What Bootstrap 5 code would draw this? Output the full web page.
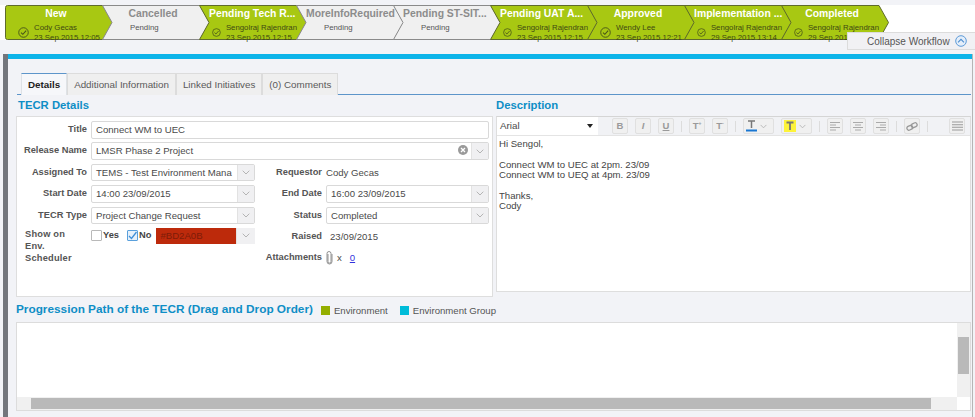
<!DOCTYPE html>
<html lang="en">
<head>
  <meta charset="UTF-8" />
  <meta name="viewport" content="width=device-width, initial-scale=1" />
  <title>TECR Details</title>
  <link href="https://cdn.jsdelivr.net/npm/bootstrap@5.3.3/dist/css/bootstrap.min.css" rel="stylesheet">
  <style>
    body { font-family: "Liberation Sans", Arial, sans-serif; font-size: 9.6px; color: #4a4a4a; background: #f2f3f7; height: 417px; overflow: hidden; }

    /* workflow strip */
    .wf-strip { margin: 5px 0 0; height: 35px; background: #fff; padding-left: 6px; position: relative; }
    .wf-step { position: relative; width: 97px; height: 35px; flex: none; }
    .wf-shape { position: absolute; left: -1px; top: 0; overflow: visible; }
    .wf-title { position: relative; margin-left: 9px; width: 82px; padding-top: 2px; text-align: center; font-size: 10.4px; font-weight: 700; line-height: 14px; white-space: nowrap; }
    .wf-sub { position: relative; display: flex; align-items: center; gap: 5px; padding-left: 12px; margin-top: 2px; font-size: 7.8px; line-height: 9.5px; white-space: nowrap; }
    .wf-done .wf-title { color: #fff; }
    .wf-done .wf-sub { color: #3f4a12; }
    .wf-todo .wf-title { color: #8c8c8c; }
    .wf-todo .wf-sub { color: #555; padding-left: 27px; }
    .wf-collapse { position: absolute; right: 0; top: 27px; width: 128px; height: 18px; background: #f1f1f4; border: 1px solid #dcdcdc; border-right: 0; font-size: 10px; color: #555; padding-left: 19px; gap: 5px; z-index: 5; }

    /* main frame */
    .tc-shell { margin: 14px 2px 0 3px; height: 363px; border-left: 5px solid #73767c; border-right: 1px solid #b5b5b5; }
    .tc-bluebar { height: 5px; background: #0db4e9; }
    .tc-tabs { margin: 14px 1px 0 9px; padding-left: 4px; height: 22px; border-bottom: 1px solid #5d95ca; flex-wrap: nowrap; }
    .tc-tabs .nav-link { height: 22px; padding: 4px 6px 0; font-size: 9.8px; line-height: 14px; color: #5a5a5a; background: #efefef; border: 1px solid #dcdcdc; border-bottom: 0; border-radius: 0; margin: 0; }
    .tc-tabs .nav-link.active { color: #222; font-weight: 700; background: #f6f7fa; border-top: 1px solid #5d95ca; height: 22px; }
    .tc-head { font-size: 11.3px; font-weight: 700; color: #0e8ec6; line-height: 14px; }
    .tc-columns { padding-left: 8px; padding-right: 1px; }
    .tc-left { width: 477px; flex: none; }
    .tc-right { margin-left: 3px; flex: 1 1 auto; }
    .tc-headrow { height: 21px; padding-top: 3px; padding-left: 2px; }
    .tc-panel { height: 181px; background: #fff; border: 1px solid #dedede; padding: 4px 3px 0 0; }

    /* form rows */
    .tc-row { display: flex; height: 17.5px; margin-bottom: 3.9px; align-items: flex-start; }
    .tc-half { display: flex; width: 238px; flex: none; }
    .tc-grow { display: flex; flex: 1 1 auto; min-width: 0; }
    .tc-label { width: 70px; flex: none; margin-right: 4px; text-align: right; font-weight: 700; font-size: 9.3px; line-height: 17px; color: #555; white-space: nowrap; }
    .tc-label.wide { width: 67px; }
    .tc-label.env { text-align: left; padding-left: 8px; line-height: 12px; white-space: normal; letter-spacing: .2px; }
    .tc-value { line-height: 17px; white-space: nowrap; }
    .tc-field { display: flex; flex: 1 1 auto; min-width: 0; height: 17.5px; padding: 0; border: 1px solid #d9d9d9; border-radius: 2px; background: #fff; font-size: 9.6px; line-height: 15.5px; color: #4a4a4a; }
    .tc-text { flex: 1 1 auto; min-width: 0; padding-left: 4px; overflow: hidden; white-space: nowrap; }
    .tc-drop { width: 17px; flex: none; display: flex; align-items: center; justify-content: center; background: #f0f0f2; border-left: 1px solid #e2e2e2; }
    .tc-clear { flex: none; margin: 2px 3px 0 0; }
    .tc-checkwrap { display: flex; align-items: center; gap: 1px; font-weight: 700; font-size: 9.3px; color: #444; line-height: 15px; }
    .tc-box { width: 11px; height: 11px; border: 1px solid #b9b9b9; border-radius: 1px; background: #fff; display: block; }
    .tc-box.on { border-color: #5aa0dc; background: #e6f1fb; }
    .tc-swatch { width: 80px; height: 16px; flex: none; background: #bd2a0b; color: #7d1c08; padding-left: 4px; line-height: 16px; font-size: 9.6px; }
    .tc-clr { margin-left: 5px; }
    .tc-link { color: #3333dd; }

    /* editor */
    .tc-editor { height: 176px; background: #fff; border: 1px solid #dedede; border-top-color: #d5d5d5; }
    .tc-toolbar { height: 19px; background: #f1f2f5; border-bottom: 1px solid #e4e4e4; gap: 7px; padding: 0 5px 0 0; }
    .tc-font { width: 101px; height: 18px; background: #fff; padding: 0 5px 0 3px; font-size: 9.8px; margin-right: 7px; flex: none; }
    .tc-tool { width: 16px; height: 16px; flex: none; background: #f0f0f0; border: 1px solid #e0e0e0; border-radius: 2px; display: flex; align-items: center; justify-content: center; color: #9a9a9a; font-weight: 700; font-size: 9.5px; line-height: 1; }
    .tc-tool.dd { width: 31px; gap: 3px; justify-content: flex-start; padding-left: 2px; }
    .tc-tool sup { font-size: 5px; top: -3px; }
    .tc-sep { width: 1px; height: 11px; background: #dcdcdc; flex: none; }
    .tc-body { padding: 3px 2px; font-size: 9.6px; line-height: 10.4px; color: #444; }

    /* progression */
    .tc-proghead { height: 25px; padding: 5px 0 0 8px; }
    .tc-legend { font-size: 9.6px; color: #555; gap: 4px; }
    .tc-chip { width: 9px; height: 9px; flex: none; }
    .tc-prog { margin: 0 1px 0 8px; height: 89px; background: #fff; border: 1px solid #dcdcdc; display: grid; grid-template-columns: 1fr 13px; grid-template-rows: 1fr 13px; }
    .tc-vbar { background: #f0f0f0; padding: 14px 1px; position: relative; }
    .tc-hbar { background: #f0f0f0; padding: 1px 26px 1px 14px; }
    .tc-thumb { background: #b9b9b9; height: 100%; }
    .tc-vthumb { background: #b9b9b9; height: 37px; }
  </style>
</head>
<body>
  <svg width="0" height="0" class="position-absolute">
    <symbol id="wf-green" viewBox="0 0 108 35"><path d="M.5.5H98L107.500 17.500 98 34.500H.5L10 17.500Z" fill="#a8c812" stroke="#5f6b2c"/></symbol>
    <symbol id="wf-grey" viewBox="0 0 108 35"><path d="M.5.5H98L107.500 17.500 98 34.500H.5L10 17.500Z" fill="#f0f0f0" stroke="#8a8a8a"/></symbol>
    <symbol id="wf-first" viewBox="0 0 108 35"><path d="M2.500.5H98L107.500 17.500 98 34.500H2.500Q.5 34.500 .5 32.500V2.500Q.5.5 2.500.5Z" fill="#a8c812" stroke="#5f6b2c"/></symbol>
    <symbol id="ic-check" viewBox="0 0 12 12"><circle cx="6" cy="6" r="5.200" fill="none" stroke="#46521a" stroke-width="1"/><path d="M3.300 6.100 5.300 8 8.900 4" fill="none" stroke="#46521a" stroke-width="1.100"/></symbol>
    <symbol id="ic-down" viewBox="0 0 8 5"><path d="M.7.7 4 4 7.300.7" fill="none" stroke="#b4b4b4" stroke-width="1"/></symbol>
  </svg>

  <div class="wf-strip d-flex">
    <div class="wf-step wf-done">
      <svg class="wf-shape" width="108" height="35"><use href="#wf-first"/></svg>
      <div class="wf-title">New</div>
      <div class="wf-sub"><svg width="11" height="11"><use href="#ic-check"/></svg><span>Cody Gecas<br>23 Sep 2015 12:05</span></div>
    </div>
    <div class="wf-step wf-todo">
      <svg class="wf-shape" width="108" height="35"><use href="#wf-grey"/></svg>
      <div class="wf-title">Cancelled</div>
      <div class="wf-sub"><span>Pending</span></div>
    </div>
    <div class="wf-step wf-done">
      <svg class="wf-shape" width="108" height="35"><use href="#wf-green"/></svg>
      <div class="wf-title">Pending Tech R...</div>
      <div class="wf-sub"><svg width="11" height="11"><use href="#ic-check"/></svg><span>Sengolraj Rajendran<br>23 Sep 2015 12:15</span></div>
    </div>
    <div class="wf-step wf-todo">
      <svg class="wf-shape" width="108" height="35"><use href="#wf-grey"/></svg>
      <div class="wf-title">MoreInfoRequired</div>
      <div class="wf-sub"><span>Pending</span></div>
    </div>
    <div class="wf-step wf-todo">
      <svg class="wf-shape" width="108" height="35"><use href="#wf-grey"/></svg>
      <div class="wf-title">Pending ST-SIT...</div>
      <div class="wf-sub"><span>Pending</span></div>
    </div>
    <div class="wf-step wf-done">
      <svg class="wf-shape" width="108" height="35"><use href="#wf-green"/></svg>
      <div class="wf-title">Pending UAT A...</div>
      <div class="wf-sub"><svg width="11" height="11"><use href="#ic-check"/></svg><span>Sengolraj Rajendran<br>23 Sep 2015 12:15</span></div>
    </div>
    <div class="wf-step wf-done">
      <svg class="wf-shape" width="108" height="35"><use href="#wf-green"/></svg>
      <div class="wf-title">Approved</div>
      <div class="wf-sub"><svg width="11" height="11"><use href="#ic-check"/></svg><span>Wendy Lee<br>23 Sep 2015 12:21</span></div>
    </div>
    <div class="wf-step wf-done">
      <svg class="wf-shape" width="108" height="35"><use href="#wf-green"/></svg>
      <div class="wf-title">Implementation ...</div>
      <div class="wf-sub"><svg width="11" height="11"><use href="#ic-check"/></svg><span>Sengolraj Rajendran<br>29 Sep 2015 13:14</span></div>
    </div>
    <div class="wf-step wf-done">
      <svg class="wf-shape" width="108" height="35"><use href="#wf-green"/></svg>
      <div class="wf-title">Completed</div>
      <div class="wf-sub"><svg width="11" height="11"><use href="#ic-check"/></svg><span>Sengolraj Rajendran<br>29 Sep 2015 13:14</span></div>
    </div>
    <div class="wf-collapse d-flex align-items-center">
      <span>Collapse Workflow</span>
      <svg width="12" height="12" viewBox="0 0 12 12"><circle cx="6" cy="6" r="5.300" fill="#e4eefa" stroke="#5d9bd8"/><path d="M3 7.300 6 4.300 9 7.300" fill="none" stroke="#4f8fd0" stroke-width="1.100"/></svg>
    </div>
  </div>

  <div class="tc-shell">
    <div class="tc-bluebar"></div>

    <ul class="nav nav-tabs tc-tabs">
      <li class="nav-item"><a class="nav-link active" href="#">Details</a></li>
      <li class="nav-item"><a class="nav-link" href="#">Additional Information</a></li>
      <li class="nav-item"><a class="nav-link" href="#">Linked Initiatives</a></li>
      <li class="nav-item"><a class="nav-link" href="#">(0) Comments</a></li>
    </ul>

    <div class="tc-columns d-flex">
      <div class="tc-left">
        <div class="tc-headrow tc-head">TECR Details</div>
        <div class="tc-panel">
          <div class="tc-row">
            <div class="tc-label">Title</div>
            <div class="form-control tc-field"><div class="tc-text">Connect WM to UEC</div></div>
          </div>
          <div class="tc-row">
            <div class="tc-label">Release Name</div>
            <div class="form-control tc-field">
              <div class="tc-text">LMSR Phase 2 Project</div>
              <svg class="tc-clear" width="10" height="10" viewBox="0 0 10 10"><circle cx="5" cy="5" r="5" fill="#9a9a9a"/><path d="M3 3 7 7M7 3 3 7" stroke="#fff" stroke-width="1.300"/></svg>
              <div class="tc-drop"><svg width="8" height="5"><use href="#ic-down"/></svg></div>
            </div>
          </div>
          <div class="tc-row">
            <div class="tc-half">
              <div class="tc-label">Assigned To</div>
              <div class="form-control tc-field"><div class="tc-text">TEMS - Test Environment Mana</div><div class="tc-drop"><svg width="8" height="5"><use href="#ic-down"/></svg></div></div>
            </div>
            <div class="tc-grow">
              <div class="tc-label wide">Requestor</div>
              <div class="tc-value">Cody Gecas</div>
            </div>
          </div>
          <div class="tc-row">
            <div class="tc-half">
              <div class="tc-label">Start Date</div>
              <div class="form-control tc-field"><div class="tc-text">14:00 23/09/2015</div><div class="tc-drop"><svg width="8" height="5"><use href="#ic-down"/></svg></div></div>
            </div>
            <div class="tc-grow">
              <div class="tc-label wide">End Date</div>
              <div class="form-control tc-field"><div class="tc-text">16:00 23/09/2015</div><div class="tc-drop"><svg width="8" height="5"><use href="#ic-down"/></svg></div></div>
            </div>
          </div>
          <div class="tc-row">
            <div class="tc-half">
              <div class="tc-label">TECR Type</div>
              <div class="form-control tc-field"><div class="tc-text">Project Change Request</div><div class="tc-drop"><svg width="8" height="5"><use href="#ic-down"/></svg></div></div>
            </div>
            <div class="tc-grow">
              <div class="tc-label wide">Status</div>
              <div class="form-control tc-field"><div class="tc-text">Completed</div><div class="tc-drop"><svg width="8" height="5"><use href="#ic-down"/></svg></div></div>
            </div>
          </div>
          <div class="tc-row">
            <div class="tc-half">
              <div class="tc-label env">Show on Env. Scheduler</div>
              <div class="d-flex align-items-start flex-fill">
                <div class="tc-checkwrap me-2"><span class="tc-box"></span>Yes</div>
                <div class="tc-checkwrap"><span class="tc-box on"><svg class="d-block" width="9" height="9" viewBox="0 0 9 9"><path d="M1 5 3.500 7.500 8.500 1" fill="none" stroke="#3f8fd8" stroke-width="1.300"/></svg></span>No</div>
                <div class="tc-swatch tc-clr">#BD2A0B</div>
                <div class="tc-drop flex-fill" style="height:16px"><svg width="8" height="5"><use href="#ic-down"/></svg></div>
              </div>
            </div>
            <div class="tc-grow">
              <div class="tc-label wide">Raised</div>
              <div class="tc-value ps-1">23/09/2015</div>
            </div>
          </div>
          <div class="tc-row">
            <div class="tc-half"></div>
            <div class="tc-grow">
              <div class="tc-label wide">Attachments</div>
              <div class="tc-value d-flex align-items-center gap-1">
                <svg width="7" height="14" viewBox="0 0 7 14"><path d="M2 3V10.500A1.500 1.500 0 0 0 5 10.500V2.500A1.700 1.700 0 0 0 1 2.500V10.500A2.500 2.500 0 0 0 6 10.500V3" fill="none" stroke="#777" stroke-width=".8"/></svg>
                <span>x</span> <a class="tc-link ms-1" href="#">0</a>
              </div>
            </div>
          </div>
        </div>
      </div>

      <div class="tc-right">
        <div class="tc-headrow tc-head" style="padding-left:0">Description</div>
        <div class="tc-editor">
          <div class="tc-toolbar d-flex align-items-center">
            <div class="tc-font d-flex align-items-center justify-content-between"><span>Arial</span><svg width="6" height="4" viewBox="0 0 6 4"><path d="M0 0H6L3 4Z" fill="#222"/></svg></div>
            <div class="tc-tool">B</div>
            <div class="tc-tool fst-italic">I</div>
            <div class="tc-tool text-decoration-underline">U</div>
            <div class="tc-sep"></div>
            <div class="tc-tool">T<sup>+</sup></div>
            <div class="tc-tool">T<sup>-</sup></div>
            <div class="tc-sep"></div>
            <div class="tc-tool dd">
              <svg width="11" height="12" viewBox="0 0 11 12"><path d="M2 1H9M5.500 1V8" stroke="#777" stroke-width="1.500" fill="none"/><path d="M0 10.500H11" stroke="#1976d2" stroke-width="2"/></svg>
              <svg width="7" height="5"><use href="#ic-down"/></svg>
            </div>
            <div class="tc-tool dd">
              <svg width="12" height="12" viewBox="0 0 12 12"><rect width="12" height="12" fill="#fdf33a"/><path d="M2.500 2.500H9.500M6 2.500V10" stroke="#777" stroke-width="1.800" fill="none"/></svg>
              <svg width="7" height="5"><use href="#ic-down"/></svg>
            </div>
            <div class="tc-sep"></div>
            <div class="tc-tool"><svg width="10" height="9" viewBox="0 0 10 9"><path d="M0 .5H10M0 3H6M0 5.500H10M0 8H6" stroke="#aaa"/></svg></div>
            <div class="tc-tool"><svg width="10" height="9" viewBox="0 0 10 9"><path d="M0 .5H10M2 3H8M0 5.500H10M2 8H8" stroke="#aaa"/></svg></div>
            <div class="tc-tool"><svg width="10" height="9" viewBox="0 0 10 9"><path d="M0 .5H10M4 3H10M0 5.500H10M4 8H10" stroke="#aaa"/></svg></div>
            <div class="tc-sep"></div>
            <div class="tc-tool"><svg width="12" height="9" viewBox="0 0 12 9"><g fill="none" stroke="#999" stroke-width="1.300"><rect x=".8" y="3.800" width="6" height="4" rx="2" transform="rotate(-25 3.800 5.800)"/><rect x="5.200" y="1.200" width="6" height="4" rx="2" transform="rotate(-25 8.200 3.200)"/></g></svg></div>
            <div class="tc-sep"></div>
            <div class="tc-tool ms-auto"><svg width="11" height="10" viewBox="0 0 11 10"><path d="M0 1H11M0 3.700H11M0 6.300H11M0 9H11" stroke="#999" stroke-width="1.100"/></svg></div>
          </div>
          <div class="tc-body">
            Hi Sengol,<br><br>
            Connect WM to UEC at 2pm. 23/09<br>
            Connect WM to UEQ at 4pm. 23/09<br><br>
            Thanks,<br>
            Cody
          </div>
        </div>
      </div>
    </div>

    <div class="tc-proghead d-flex align-items-start">
      <div class="tc-head" style="font-size:11.800px">Progression Path of the TECR (Drag and Drop Order)</div>
      <div class="tc-legend d-flex align-items-center ms-2 pt-1" style="line-height:9px">
        <span class="tc-chip" style="background:#94ae00"></span><span class="me-2">Environment</span>
        <span class="tc-chip" style="background:#00bcd9"></span><span>Environment Group</span>
      </div>
    </div>
    <div class="tc-prog">
      <div></div>
      <div class="tc-vbar"><div class="tc-vthumb"></div></div>
      <div class="tc-hbar"><div class="tc-thumb"></div></div>
      <div></div>
    </div>
  </div>
</body>
</html>
